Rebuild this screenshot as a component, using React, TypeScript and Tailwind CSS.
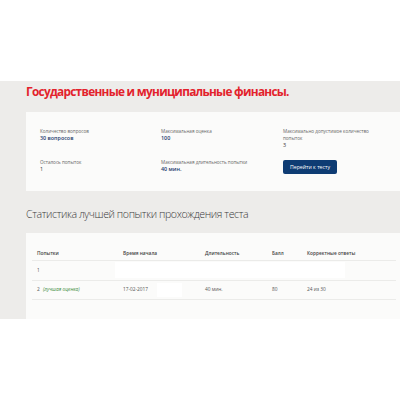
export default function App() {
  const font = { fontFamily: '"Open Sans", "Noto Sans", sans-serif' }
  return (
    <div className="w-[400px] h-[400px] bg-white overflow-hidden font-['Open_Sans',sans-serif]" style={font}>
      <div className="h-[81px]" />
      <div className="bg-[#edecea] pl-[26px] h-[238px]">
        <h1 className="h-[20px] leading-[20px] text-[11.8px] font-bold text-[#e3222c] tracking-[-0.7px] whitespace-nowrap">
          Государственные и муниципальные финансы.
        </h1>

        <div className="mt-[11px] h-[79px] bg-[#fbfbfa] pl-[14px] pt-[16px]">
          <div className="grid grid-cols-[121px_122px_1fr] gap-y-[10px] text-[4.6px] leading-[7px]">
            <div>
              <div className="text-[#666]">Количество вопросов</div>
              <div className="text-[5.4px] font-semibold text-[#1d3b6e]">30 вопросов</div>
            </div>
            <div>
              <div className="text-[#666]">Максимальная оценка</div>
              <div className="text-[5.4px] font-semibold text-[#1d3b6e]">100</div>
            </div>
            <div>
              <div className="text-[#666] w-[86px]">Максимально допустимое количество попыток</div>
              <div className="text-[5.4px] text-[#333]">3</div>
            </div>
            <div>
              <div className="text-[#666]">Осталось попыток</div>
              <div className="text-[5.4px] text-[#333]">1</div>
            </div>
            <div>
              <div className="text-[#666]">Максимальная длительность попытки</div>
              <div className="text-[5.4px] font-semibold text-[#1d3b6e]">40 мин.</div>
            </div>
            <div className="pt-[0.5px]">
              <button className="w-[54px] h-[14px] rounded-[2px] bg-[#0e3c73] text-white text-[5.2px] leading-[14px]">
                Перейти к тесту
              </button>
            </div>
          </div>
        </div>

        <h2 className="mt-[13px] h-[20px] leading-[20px] text-[10.6px] font-light text-[#3a3a3a] tracking-[-0.4px] whitespace-nowrap">
          Статистика лучшей попытки прохождения теста
        </h2>

        <div className="mt-[9px] h-[86px] bg-[#fbfbfa] pl-[6px] pr-[4px] pt-[15px]">
          <div className="grid grid-cols-[86px_82px_67px_35px_1fr] pl-[5px] h-[13px] items-center border-b border-[#ebebe9] text-[4.8px] font-semibold text-[#444]">
            <div>Попытки</div>
            <div>Время начала</div>
            <div>Длительность</div>
            <div>Балл</div>
            <div>Корректные ответы</div>
          </div>
          <div className="relative grid grid-cols-[86px_82px_67px_35px_1fr] pl-[5px] h-[20px] items-center border-b border-[#ebebe9] text-[4.8px] text-[#555]">
            <div>1</div>
            <div className="absolute left-[83px] top-[1px] w-[230px] h-[16px] bg-white" />
          </div>
          <div className="relative grid grid-cols-[86px_82px_67px_35px_1fr] pl-[5px] h-[19px] items-center border-b border-[#ebebe9] text-[4.8px] text-[#555]">
            <div>
              2 <span className="ml-[2px] italic text-[#3c8c3c]">(лучшая оценка)</span>
            </div>
            <div>17-02-2017</div>
            <div>40 мин.</div>
            <div>80</div>
            <div>24 из 30</div>
            <div className="absolute left-[125px] top-[2px] w-[25px] h-[14px] bg-white" />
          </div>
        </div>
      </div>
    </div>
  )
}
